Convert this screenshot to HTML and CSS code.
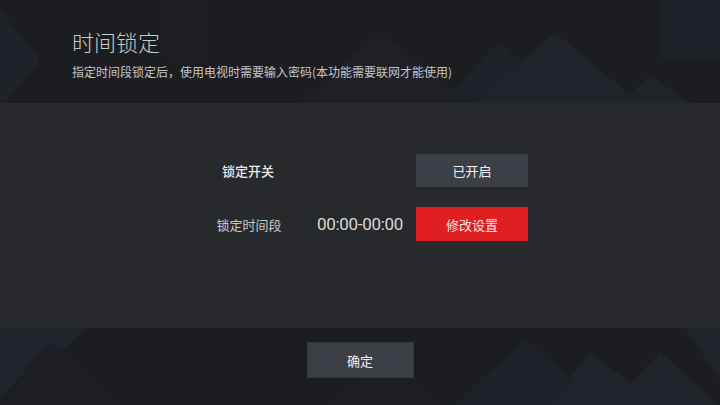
FILE: index.html
```html
<!DOCTYPE html>
<html lang="zh">
<head>
<meta charset="utf-8">
<link rel="stylesheet" href="styles.css">
</head>
<body>
<div class="screen">
  <svg class="bg" width="720" height="405" viewBox="0 0 720 405" aria-hidden="true">
    <polygon points="0,10 40,60 0,110" fill="#202229"/>
    <polygon points="300,103 380,30 470,103" fill="#1e2026"/>
    <polygon points="440,103 500,40 560,103" fill="#1f2128"/>
    <polygon points="475,103 555,32 640,103" fill="#20232a"/>
    <polygon points="620,103 650,75 690,103" fill="#20232a"/>
    <rect x="163" y="0" width="45" height="60" fill="#1d1e23"/>
    <rect x="660" y="0" width="60" height="60" fill="#1f2128"/>
    <polygon points="0,328 88,328 60,352 50,342 0,400" fill="#20232b"/>
    <polygon points="0,405 50,342 120,405" fill="#1d1f24"/>
    <polygon points="330,405 382,362 440,405" fill="#1d1f24"/>
    <polygon points="455,405 525,338 600,405" fill="#1f2128"/>
    <polygon points="550,405 590,352 660,405" fill="#20232a"/>
    <polygon points="610,405 660,352 720,405" fill="#20232a"/>
    <polygon points="685,328 720,328 720,380" fill="#20232a"/>
  </svg>
  <header class="head">
    <h1 class="title">时间锁定</h1>
    <p class="desc">指定时间段锁定后，使用电视时需要输入密码(本功能需要联网才能使用)</p>
  </header>
  <main class="panel">
    <div class="grid">
      <div class="label strong">锁定开关</div>
      <div class="value"></div>
      <div class="btn gray">已开启</div>
      <div class="label">锁定时间段</div>
      <div class="value time">00:00-00:00</div>
      <div class="btn red">修改设置</div>
    </div>
  </main>
  <footer class="foot">
    <div class="btn gray ok">确定</div>
  </footer>
</div>
</body>
</html>
```
FILE: styles.css
```css
* { box-sizing: border-box; }
html, body { margin: 0; padding: 0; }
body {
  width: 720px;
  height: 405px;
  overflow: hidden;
  background: #1c1d21;
  font-family: "Noto Sans CJK SC", "Noto Sans", sans-serif;
}
.screen {
  position: relative;
  width: 720px;
  height: 405px;
  display: flex;
  flex-direction: column;
}
.bg {
  position: absolute;
  left: 0;
  top: 0;
  z-index: 0;
}
.head, .panel, .foot { position: relative; z-index: 1; }
.head {
  height: 103px;
  padding: 26px 0 0 72px;
}
.title {
  margin: 0;
  font-size: 22px;
  font-weight: 300;
  line-height: 30px;
  color: #c9cacc;
}
.desc {
  margin: 8px 0 0;
  font-size: 12px;
  line-height: 16px;
  color: #c4c5c8;
}
.panel {
  height: 225px;
  background: #28292d;
  padding-top: 51px;
}
.grid {
  display: grid;
  grid-template-columns: 112px 112px 112px;
  grid-template-rows: 33px 34px;
  row-gap: 20px;
  justify-content: center;
  align-items: center;
}
.label {
  text-align: center;
  font-size: 13px;
  color: #c9cacd;
  padding-left: 2px;
}
.label.strong { color: #ececec; font-weight: 500; padding-left: 0; }
.value { text-align: center; }
.time {
  font-family: Roboto, "Noto Sans", sans-serif;
  font-size: 17px;
  font-weight: 400;
  color: #d8d8da;
  letter-spacing: -0.3px;
}
.btn {
  height: 100%;
  display: flex;
  align-items: center;
  justify-content: center;
  font-size: 13px;
  color: #f0f0f0;
}
.gray { background: #3d3f46; }
.red { background: #e02020; color: #fbe5e5; }
.foot {
  flex: 1;
  display: flex;
  justify-content: center;
  padding-top: 14px;
}
.ok {
  width: 107px;
  height: 36px;
  border: 1px solid #35373c;
}
```
